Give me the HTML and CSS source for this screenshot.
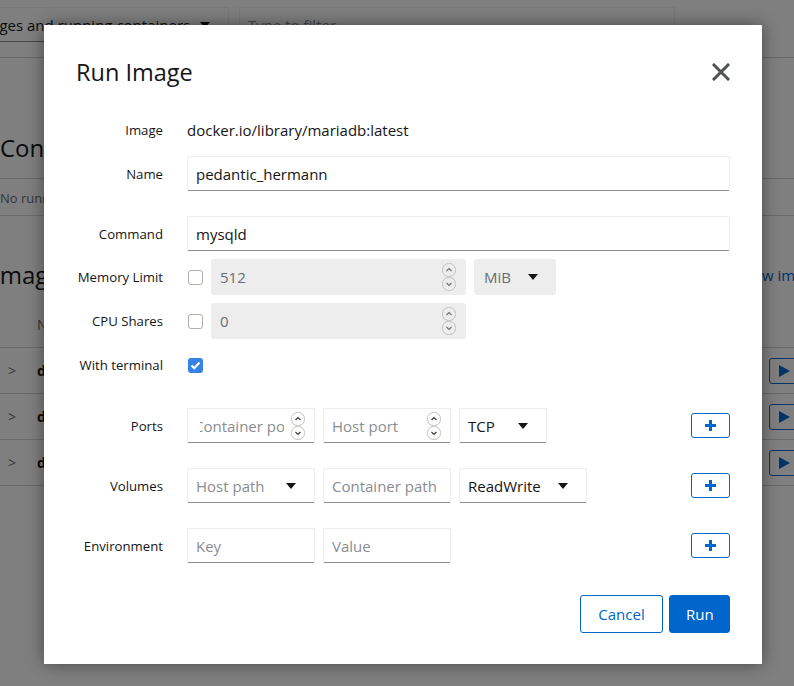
FILE: index.html
```html
<!DOCTYPE html>
<html>
<head>
  <title>Run Image</title>
  <link rel="stylesheet" href="styles.css">
</head>
<body>
  <div class="page">
    <div class="toolbar">
      <div class="filter-select">Images and running containers <span class="caret"></span></div>
      <div class="filter-input">Type to filter</div>
    </div>
    <div class="content">
      <section class="panel">
        <h2 class="panel-title">Containers</h2>
        <div class="panel-empty">No running containers</div>
      </section>
      <section class="panel panel-images">
        <div class="panel-head">
          <h2 class="panel-title">Images</h2>
          <span class="panel-link">Get new image</span>
        </div>
        <div class="image-head"><span class="col-name">Name</span></div>
        <div class="image-row"><span class="chev">&gt;</span><b>docker.io/library/mariadb:latest</b><span class="play"></span></div>
        <div class="image-row"><span class="chev">&gt;</span><b>docker.io/library/nginx:latest</b><span class="play"></span></div>
        <div class="image-row"><span class="chev">&gt;</span><b>docker.io/library/redis:latest</b><span class="play"></span></div>
      </section>
    </div>
  </div>

  <div class="backdrop">
    <div class="modal">
      <div class="modal-head">
        <h1 class="modal-title">Run Image</h1>
        <svg class="close" width="18" height="18" viewBox="0 0 18 18">
          <path d="M2 2 L16 16 M16 2 L2 16" stroke="#4f5255" stroke-width="3" stroke-linecap="square"/>
        </svg>
      </div>

      <div class="form">
        <div class="row row-tall">
          <div class="label">Image</div>
          <div class="value">docker.io/library/mariadb:latest</div>
        </div>
        <div class="row">
          <div class="label">Name</div>
          <div class="field field-wide">pedantic_hermann</div>
        </div>

        <div class="row spaced">
          <div class="label">Command</div>
          <div class="field field-wide">mysqld</div>
        </div>
        <div class="row row-tall">
          <div class="label">Memory Limit</div>
          <div class="controls">
            <span class="check"></span>
            <div class="field field-disabled field-mem">512
              <svg class="spin" width="14" height="28" viewBox="0 0 14 28"><rect x="0.5" y="0.5" width="13" height="13" rx="6" fill="none" stroke="#c4c0bb"/><rect x="0.5" y="14.5" width="13" height="13" rx="6" fill="none" stroke="#c4c0bb"/><path d="M4.5 8 L7 5.5 L9.5 8 M4.5 20 L7 22.5 L9.5 20" fill="none" stroke="#77736e" stroke-width="1.2"/></svg>
            </div>
            <div class="select select-disabled select-unit">MiB <span class="caret"></span></div>
          </div>
        </div>
        <div class="row row-tall">
          <div class="label">CPU Shares</div>
          <div class="controls">
            <span class="check"></span>
            <div class="field field-disabled field-mem">0
              <svg class="spin" width="14" height="28" viewBox="0 0 14 28"><rect x="0.5" y="0.5" width="13" height="13" rx="6" fill="none" stroke="#c4c0bb"/><rect x="0.5" y="14.5" width="13" height="13" rx="6" fill="none" stroke="#c4c0bb"/><path d="M4.5 8 L7 5.5 L9.5 8 M4.5 20 L7 22.5 L9.5 20" fill="none" stroke="#77736e" stroke-width="1.2"/></svg>
            </div>
          </div>
        </div>
        <div class="row row-tall">
          <div class="label">With terminal</div>
          <div class="controls">
            <span class="check checked">
              <svg width="15" height="15" viewBox="0 0 15 15"><path d="M3.5 7.5 L6.3 10.2 L11.5 4.5" fill="none" stroke="#fff" stroke-width="2.2"/></svg>
            </span>
          </div>
        </div>

        <div class="row spaced">
          <div class="label">Ports</div>
          <div class="controls">
            <div class="field field-small placeholder">
              <span class="clip"><span class="scrolled">Container port</span></span>
              <svg class="spin" width="14" height="28" viewBox="0 0 14 28"><rect x="0.5" y="0.5" width="13" height="13" rx="6" fill="none" stroke="#c4c0bb"/><rect x="0.5" y="14.5" width="13" height="13" rx="6" fill="none" stroke="#c4c0bb"/><path d="M4.5 8 L7 5.5 L9.5 8 M4.5 20 L7 22.5 L9.5 20" fill="none" stroke="#3c3a38" stroke-width="1.2"/></svg>
            </div>
            <div class="field field-small placeholder">Host port
              <svg class="spin" width="14" height="28" viewBox="0 0 14 28"><rect x="0.5" y="0.5" width="13" height="13" rx="6" fill="none" stroke="#c4c0bb"/><rect x="0.5" y="14.5" width="13" height="13" rx="6" fill="none" stroke="#c4c0bb"/><path d="M4.5 8 L7 5.5 L9.5 8 M4.5 20 L7 22.5 L9.5 20" fill="none" stroke="#3c3a38" stroke-width="1.2"/></svg>
            </div>
            <div class="select select-proto">TCP <span class="caret"></span></div>
            <span class="add"><svg width="13" height="13" viewBox="0 0 13 13"><path d="M6.5 1 V12 M1 6.5 H12" stroke="#0066cc" stroke-width="3"/></svg></span>
          </div>
        </div>

        <div class="row spaced">
          <div class="label">Volumes</div>
          <div class="controls">
            <div class="select field-small placeholder">Host path <span class="caret"></span></div>
            <div class="field field-small placeholder">Container path</div>
            <div class="select field-small">ReadWrite <span class="caret"></span></div>
            <span class="add"><svg width="13" height="13" viewBox="0 0 13 13"><path d="M6.5 1 V12 M1 6.5 H12" stroke="#0066cc" stroke-width="3"/></svg></span>
          </div>
        </div>

        <div class="row spaced">
          <div class="label">Environment</div>
          <div class="controls">
            <div class="field field-small placeholder">Key</div>
            <div class="field field-small placeholder">Value</div>
            <span class="add"><svg width="13" height="13" viewBox="0 0 13 13"><path d="M6.5 1 V12 M1 6.5 H12" stroke="#0066cc" stroke-width="3"/></svg></span>
          </div>
        </div>
      </div>

      <div class="footer">
        <button class="btn btn-secondary">Cancel</button>
        <button class="btn btn-primary">Run</button>
      </div>
    </div>
  </div>
</body>
</html>
```

FILE: styles.css
```css
body {
  font-family: "Open Sans", sans-serif;
  color: #151515;
  margin: 0;
  padding: 0;
  width: 794px;
  height: 686px;
  overflow: hidden;
  position: relative;
  background: #f0f0f0;
}

/* page behind the dialog */
.page {
  margin-left: -36px;
  width: 860px;
  height: 686px;
  overflow: hidden;
}

.toolbar {
  display: flex;
  gap: 10px;
  height: 50px;
  padding-top: 7px;
  background: #fff;
  border-bottom: 1px solid #d2d2d2;
}

.filter-select {
  box-sizing: border-box;
  width: 265px;
  height: 35px;
  padding: 0 18px 0 8px;
  display: flex;
  align-items: center;
  justify-content: space-between;
  font-size: 15px;
  border: 1px solid #f0f0f0;
  border-bottom-color: #8a8d90;
}

.filter-input {
  box-sizing: border-box;
  width: 436px;
  height: 35px;
  padding: 0 8px;
  display: flex;
  align-items: center;
  font-size: 15px;
  color: #8a8d90;
  border: 1px solid #f0f0f0;
  border-bottom-color: #8a8d90;
}

.content {
  padding: 72px 0 0 36px;
  background: #fff;
  height: 556px;
}

.panel-title {
  margin: 0;
  font-size: 24px;
  font-weight: 400;
  line-height: 36px;
}

.panel-empty {
  margin-top: 12px;
  height: 36px;
  line-height: 38px;
  font-size: 13px;
  color: #6a6e73;
  border-top: 1px solid #d2d2d2;
  border-bottom: 1px solid #d2d2d2;
}

.panel-images {
  margin-top: 41px;
}

.panel-head {
  display: flex;
  justify-content: space-between;
  align-items: center;
}

.panel-head .panel-title {
  margin-left: -7px;
}

.panel-link {
  font-size: 15px;
  color: #0066cc;
  margin-right: 4px;
}

.image-head {
  margin-top: 9px;
  height: 45px;
  line-height: 45px;
  padding-left: 37px;
  font-size: 14px;
  color: #6a6e73;
  border-bottom: 1px solid #d2d2d2;
}

.image-row {
  display: flex;
  align-items: center;
  height: 45px;
  font-size: 14px;
  border-bottom: 1px solid #d2d2d2;
}

.chev {
  width: 37px;
  padding-left: 8px;
  box-sizing: border-box;
  color: #6a6e73;
}

.play {
  margin-left: auto;
  margin-right: 25px;
  width: 30px;
  height: 26px;
  box-sizing: border-box;
  border: 1px solid #0066cc;
  border-radius: 3px;
  position: relative;
}

.play::after {
  content: "";
  position: absolute;
  left: 9px;
  top: 6px;
  border-left: 11px solid #0066cc;
  border-top: 6px solid transparent;
  border-bottom: 6px solid transparent;
}

/* dialog */
.backdrop {
  position: absolute;
  top: 0;
  left: 0;
  right: 0;
  bottom: 0;
  background: rgba(0, 0, 0, 0.5);
}

.modal {
  position: absolute;
  left: 44px;
  top: 25px;
  width: 718px;
  box-sizing: border-box;
  padding: 29px 32px 31px;
  background: #fff;
  box-shadow: 0 0 16px rgba(0, 0, 0, 0.45);
}

.modal-head {
  display: flex;
  justify-content: space-between;
  align-items: center;
  height: 36px;
}

.modal-title {
  margin: 0;
  font-size: 23.5px;
  font-weight: 400;
  line-height: 36px;
}

.form {
  margin-top: 22px;
  display: flex;
  flex-direction: column;
  gap: 8px;
}

.row {
  display: grid;
  grid-template-columns: 87px 1fr;
  column-gap: 24px;
  align-items: center;
  min-height: 35px;
}

.row-tall {
  min-height: 36px;
}

.row.spaced {
  margin-top: 17px;
}

.label {
  text-align: right;
  font-size: 13.2px;
  white-space: nowrap;
}

.value {
  font-size: 15px;
}

.controls {
  display: flex;
  align-items: center;
  gap: 8px;
}

.field,
.select {
  box-sizing: border-box;
  height: 35px;
  padding: 0 8px;
  display: flex;
  align-items: center;
  font-size: 15px;
  border: 1px solid #ededed;
  border-bottom-color: #8a8d90;
  border-radius: 2px;
  white-space: nowrap;
}

.field-wide {
  width: 100%;
}

.field-small {
  width: 128px;
}

.placeholder {
  color: #8a8d90;
}

.field .spin {
  margin-left: auto;
  margin-right: 1px;
}

.field-disabled,
.select-disabled {
  height: 36px;
  background: #ededed;
  border: none;
  border-radius: 3px;
  color: #6a6e73;
}

.field-mem {
  width: 255px;
  padding: 0 9px 0 9px;
}

.select {
  justify-content: space-between;
  padding-right: 18px;
}

.select-unit {
  width: 82px;
  padding-left: 10px;
}

.select-proto {
  width: 88px;
}

.caret {
  display: inline-block;
  width: 0;
  height: 0;
  border-left: 5px solid transparent;
  border-right: 5px solid transparent;
  border-top: 6px solid #151515;
}

.clip {
  display: block;
  width: 84px;
  margin-left: 4px;
  overflow: hidden;
}

.scrolled {
  display: block;
  margin-left: -6px;
}

.check {
  box-sizing: border-box;
  width: 15px;
  height: 15px;
  margin-left: 1px;
  border: 1px solid #b3aea8;
  border-radius: 3px;
  background: #fff;
  flex: none;
}

.check.checked {
  border: none;
  background: #3584e4;
}

.check svg {
  display: block;
}

.add {
  margin-left: auto;
  width: 39px;
  height: 25px;
  box-sizing: border-box;
  border: 1px solid #0066cc;
  border-radius: 3px;
  display: flex;
  align-items: center;
  justify-content: center;
}

.footer {
  display: flex;
  justify-content: flex-end;
  gap: 6px;
  margin-top: 32px;
}

.btn {
  height: 38px;
  padding: 0 16px;
  font-family: "Open Sans", sans-serif;
  font-size: 15px;
  border-radius: 3px;
  border: 1px solid #0066cc;
}

.btn-secondary {
  width: 83px;
  background: #fff;
  color: #0066cc;
}

.btn-primary {
  width: 61px;
  background: #0066cc;
  color: #fff;
}
```
